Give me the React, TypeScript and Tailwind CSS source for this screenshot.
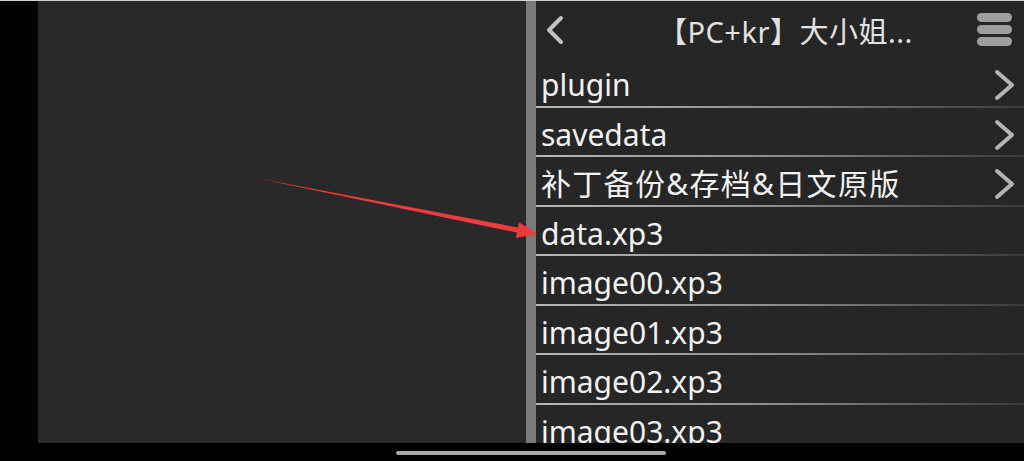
import React from "react";

const rows: { name: string; dir: boolean; cjk?: boolean }[] = [
  { name: "plugin", dir: true },
  { name: "savedata", dir: true },
  { name: "补丁备份&存档&日文原版", dir: true, cjk: true },
  { name: "data.xp3", dir: false },
  { name: "image00.xp3", dir: false },
  { name: "image01.xp3", dir: false },
  { name: "image02.xp3", dir: false },
  { name: "image03.xp3", dir: false },
];

const font = { fontFamily: '"Noto Sans", "Noto Sans CJK SC", sans-serif' };

function Chevron() {
  return (
    <svg width="22" height="32" viewBox="0 0 22 32" className="shrink-0">
      <polyline points="3,3 18,16 3,29" fill="none" stroke="#b4b4b4" strokeWidth="4" strokeLinecap="round" strokeLinejoin="round" />
    </svg>
  );
}

export default function App() {
  return (
    <div className="relative w-[1024px] h-[461px] bg-black flex flex-col overflow-hidden" style={font}>
      <div className="h-px bg-[#cfcfcf] shrink-0" />
      <div className="flex h-[442px] shrink-0">
        <div className="w-[38px] bg-black" />
        <div className="w-[488px] bg-[#292929]" />
        <div className="w-[10px] bg-[#7a7a7a]" />
        <div className="flex-1 bg-[#262626] flex flex-col overflow-hidden">
          <div className="h-[57px] shrink-0 flex items-center pl-[9px] pr-[12px]">
            <svg width="20" height="30" viewBox="0 0 20 30" className="shrink-0">
              <polyline points="16,3 4,15 16,27" fill="none" stroke="#c2c2c2" strokeWidth="4" strokeLinecap="round" strokeLinejoin="round" />
            </svg>
            <div className="ml-[93px] mt-[4px] text-[29px] tracking-[0.5px] leading-none text-[#e2e2e2] whitespace-nowrap">【PC+kr】大小姐...</div>
            <div className="ml-auto flex flex-col gap-[3.5px]">
              <div className="w-[35px] h-[8.5px] rounded-full bg-[#9e9e9e]" />
              <div className="w-[35px] h-[8.5px] rounded-full bg-[#9e9e9e]" />
              <div className="w-[35px] h-[8.5px] rounded-full bg-[#9e9e9e]" />
            </div>
          </div>
          {rows.map((r) => (
            <div key={r.name} className="h-[49.5px] shrink-0 flex flex-col">
              <div className="flex-1 flex items-start pl-[5px] pr-[8px] pt-[12px]">
                <span
                  className={
                    r.cjk
                      ? "text-[30px] leading-[30px] tracking-[1.3px] text-[#f2f2f2] whitespace-nowrap"
                      : "text-[30px] leading-[30px] text-[#f2f2f2] whitespace-nowrap"
                  }
                >
                  {r.name}
                </span>
                {r.dir && (
                  <div className="ml-auto -mt-[1px]">
                    <Chevron />
                  </div>
                )}
              </div>
              <div className="h-[2px] bg-linear-to-r from-[#b8b8b8] via-[#8c8c8c] to-[#3a3a3a]" />
            </div>
          ))}
        </div>
      </div>
      <div className="flex-1">
        <div className="ml-[396px] mt-[8px] w-[270px] h-[4px] rounded-full bg-[#a8a8a8]" />
      </div>
      <svg className="absolute left-0 top-0 pointer-events-none" width="1024" height="461" viewBox="0 0 1024 461">
        <polygon points="256,178 517.9,227.6 519,222.2 537,234 515.8,238 516.9,232.6" fill="#ef3b3b" />
      </svg>
    </div>
  );
}
